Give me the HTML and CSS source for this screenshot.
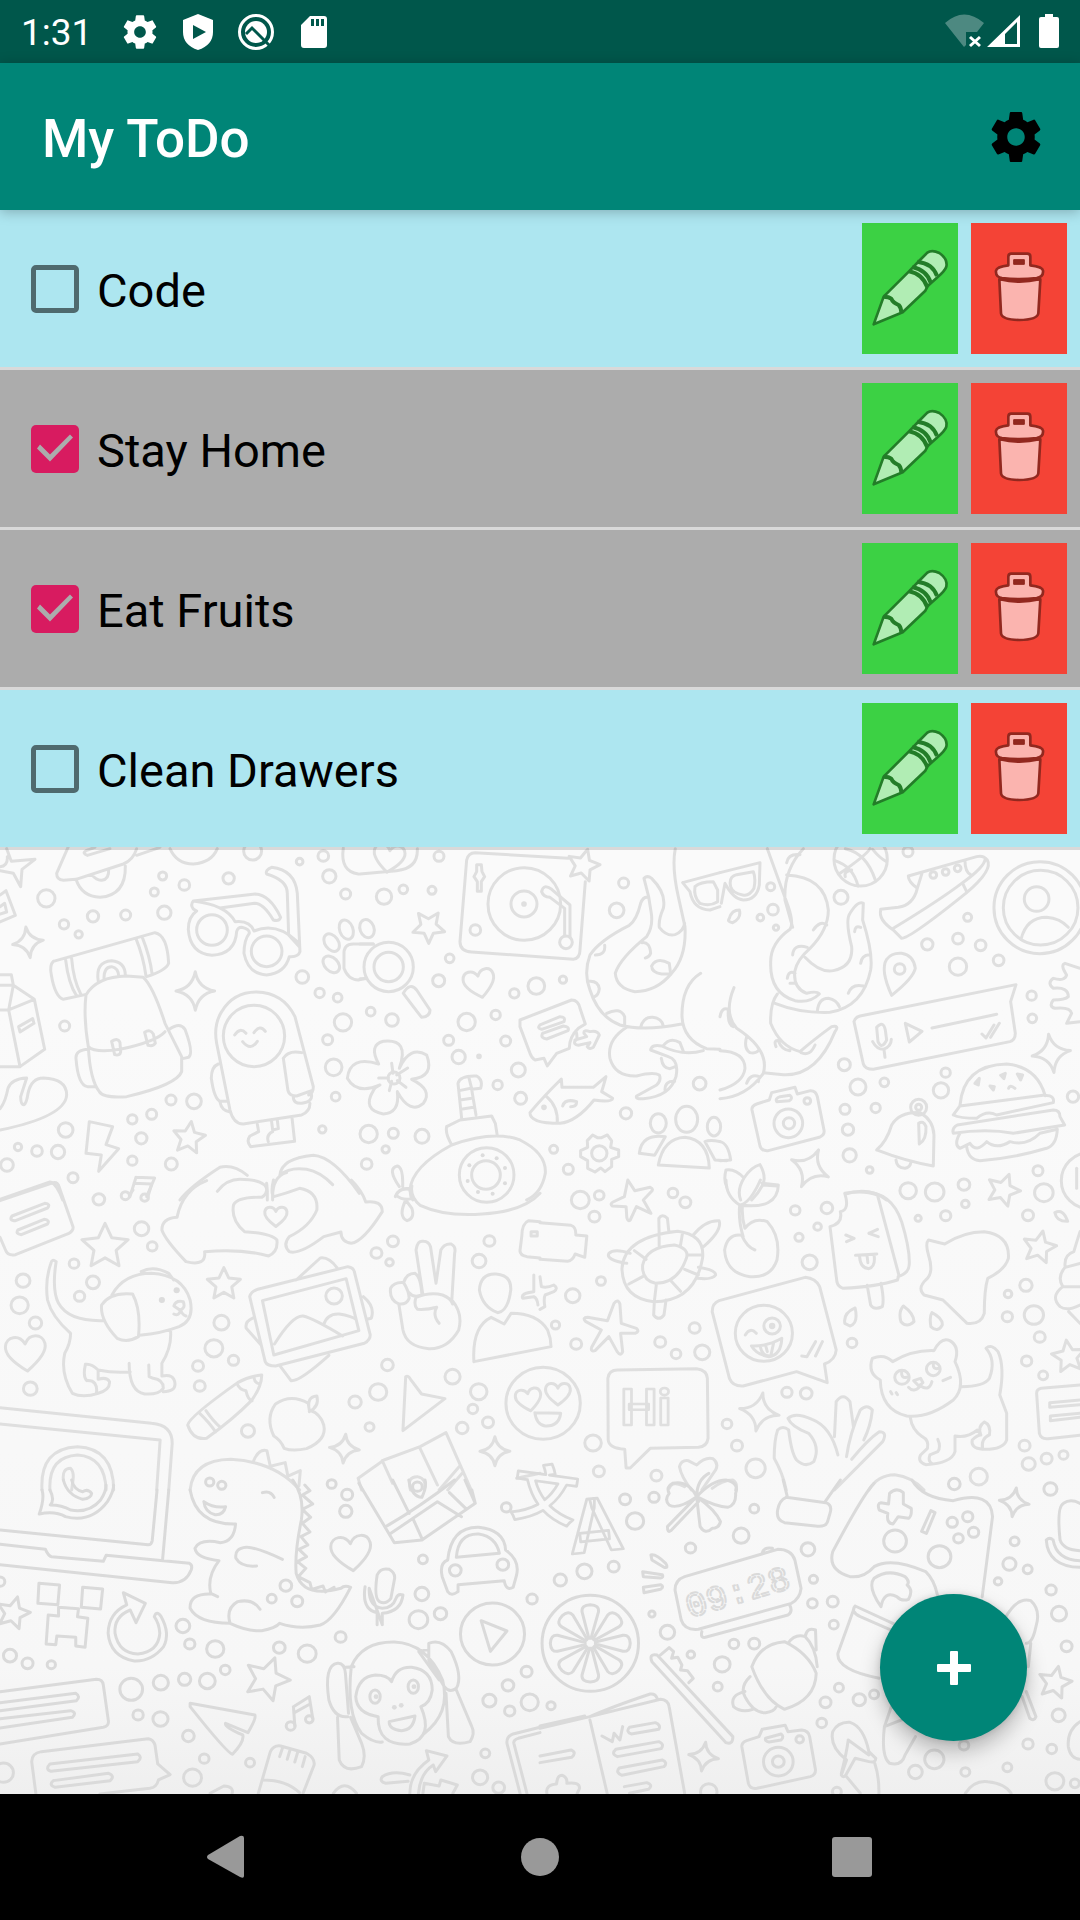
FILE: index.html
```
<!DOCTYPE html>
<html lang="en">
<head>
<meta charset="utf-8">
<meta name="viewport" content="width=device-width, initial-scale=1">
<title>My ToDo</title>
<link rel="stylesheet" href="styles.css">
</head>
<body>
<svg class="defs" width="0" height="0" aria-hidden="true">
  <symbol id="gear" viewBox="0 0 24 24"><path d="M19.43 12.98c.04-.32.07-.64.07-.98s-.03-.66-.07-.98l2.11-1.65c.19-.15.24-.42.12-.64l-2-3.46c-.12-.22-.39-.3-.61-.22l-2.49 1c-.52-.4-1.08-.73-1.69-.98l-.38-2.65C14.46 2.18 14.25 2 14 2h-4c-.25 0-.46.18-.49.42l-.38 2.65c-.61.25-1.17.59-1.69.98l-2.49-1c-.23-.09-.49 0-.61.22l-2 3.46c-.13.22-.07.49.12.64l2.11 1.65c-.04.32-.07.65-.07.98s.03.66.07.98l-2.11 1.65c-.19.15-.24.42-.12.64l2 3.46c.12.22.39.3.61.22l2.49-1c.52.4 1.08.73 1.69.98l.38 2.65c.03.24.24.42.49.42h4c.25 0 .46-.18.49-.42l.38-2.65c.61-.25 1.17-.59 1.69-.98l2.49 1c.23.09.49 0 .61-.22l2-3.46c.12-.22.07-.49-.12-.64l-2.11-1.65zM12 15.5c-1.93 0-3.5-1.57-3.5-3.5s1.57-3.5 3.5-3.5 3.5 1.57 3.5 3.5-1.57 3.5-3.5 3.5z"/></symbol>
  <symbol id="pencil" viewBox="66 69 288 393">
    <path d="M101 373L131 290L207 214L240 180L262 158Q276 148 298 159Q324 177 319 200Q316 212 290 234L264 257L256 272L188 337Z"/>
    <path class="thick" d="M131 290Q147 290 154 296Q158 308 176 315Q183 322 184 337M207 214Q248 222 262 262M217 201Q260 210 272 248M232 185Q278 190 291 228"/>
  </symbol>
  <symbol id="trash" viewBox="393 69 288 393">
    <path d="M478 238L483 340Q486 359 538 360Q592 359 595 340L601 238Z"/>
    <path class="thick" d="M480 236Q538 250 598 236"/>
    <path d="M505 196V170Q505 161 514 161H562Q571 161 571 170V196Q608 200 609 212Q611 231 590 234Q538 240 486 234Q466 231 468 212Q470 200 505 196Z"/>
    <path class="slot" d="M521 179H553V193H521Z"/>
  </symbol>
</svg>

<header class="status">
  <time class="clock">1:31</time>
  <div class="notices">
    <svg class="notice" aria-hidden="true"><use href="#gear"/></svg>
    <svg class="notice" viewBox="0 0 40 40" aria-hidden="true"><path fill-rule="evenodd" d="M20 2L35 8V20Q35 33 20 38Q5 33 5 20V8ZM15 13V27L28 20Z"/></svg>
    <svg class="notice" viewBox="0 0 40 40" aria-hidden="true"><circle cx="20" cy="20" r="16.500" fill="none" stroke="#fff" stroke-width="3"/><circle cx="20" cy="20" r="11"/><path d="M10 22L16 16L34 34" fill="none" stroke="#00574b" stroke-width="3"/></svg>
    <svg class="notice" viewBox="0 0 40 40" aria-hidden="true"><path fill-rule="evenodd" d="M16 4H30Q33 4 33 7V33Q33 36 30 36H10Q7 36 7 33V13ZM17 7V14H20V7ZM22 7V14H25V7ZM27 7V14H30V7Z"/></svg>
  </div>
  <div class="signals">
    <svg width="39" height="36" viewBox="0 0 39 36" aria-hidden="true"><path opacity=".3" d="M0 9Q19-8 39 9L32 18H21V31L19 33Z"/><path d="M25 23L35 32M35 23L25 32" stroke="#fff" stroke-width="3"/></svg>
    <svg width="33" height="36" viewBox="0 0 33 36" aria-hidden="true"><path fill-rule="evenodd" d="M33 1V33H0ZM30 8L18 20V30H30Z"/></svg>
    <svg class="battery" width="20" height="36" viewBox="0 0 20 36" aria-hidden="true"><path d="M6 0H14V3H18Q20 3 20 5V32Q20 34 18 34H2Q0 34 0 32V5Q0 3 2 3H6Z"/></svg>
  </div>
</header>

<div class="appbar">
  <h1>My ToDo</h1>
  <button class="settings" type="button" aria-label="Settings"><svg aria-hidden="true"><use href="#gear"/></svg></button>
</div>

<main>
  <svg class="wallpaper" viewBox="0 210 1080 1584" preserveAspectRatio="xMidYMax slice" aria-hidden="true">
    <defs>
      <path id="spark" d="M0-58Q8-10 58 0Q10 8 0 58Q-8 10-58 0Q-10-8 0-58Z"/>
      <path id="st" d="M0-50L14-19L48-15L23 8L29 41L0 24L-29 41L-23 8L-48-15L-14-19Z"/>
      <path id="heart" d="M0 45C-20 30-50 5-46-18C-42-42-12-45 0-20C12-45 42-42 46-18C50 5 20 30 0 45Z"/>
    </defs>

    <!-- upper left: skateboard, glasses, backpack, astronaut -->
    <g transform="translate(0 840) scale(.3333)">
      <path d="M205 20L170 100Q170 120 190 121L228 118L370 72Q400 60 410 26M410 46L480 22M228 118Q245 170 300 172Q378 166 376 78M275 104Q290 122 305 121Q328 118 326 88M262 46Q245 40 258 32L285 22M262 46L330 26M510 26Q530 72 580 72Q635 68 652 26"/>
      <path d="M20 26L34 64L105 58L66 88L62 140L40 100L0 92M0 165L18 152L46 226L0 246M0 200L14 190L20 216L0 222M0 80Q24 78 22 50"/>
      <path d="M0 404H34L40 436L103 478L134 628L60 680L26 510L40 436H0M26 510L103 478M0 510H26M0 680H60M56 560L98 536L102 550L60 576Z"/>
      <path d="M0 806Q15 790 24 745Q34 716 80 714L62 770Q62 794 72 794Q80 790 84 760Q94 714 130 714Q200 716 200 765Q196 830 0 870"/>
      <path d="M580 183L766 162Q810 164 842 232Q838 245 820 240Q790 190 764 190L660 204M580 183Q570 195 580 207L590 213Q565 230 565 268Q570 340 636 346Q706 342 710 275Q714 262 725 262Q750 268 748 280Q732 300 732 340Q744 402 800 405Q855 400 868 350Q895 352 900 335L892 160Q885 90 815 82Q795 90 800 102Q862 120 862 160L866 285L898 320M580 183Q680 195 705 245Q750 240 762 273Q830 245 892 305"/>
      <circle cx="636" cy="270" r="46"/><circle cx="800" cy="334" r="46"/>
      <path d="M160 364L465 278Q502 285 506 370Q498 392 440 410M160 364Q148 375 154 405Q165 470 190 478L255 464M197 360Q205 430 230 468M215 356Q220 420 243 464M408 296Q430 350 438 408M427 292Q450 350 456 400M295 425Q285 365 335 362Q375 365 376 405M312 415Q312 380 335 380Q355 384 356 408"/>
      <path d="M265 620Q250 530 258 465Q290 410 380 408L430 412Q460 440 495 550L545 650V695Q530 735 380 770Q310 775 298 755Q270 720 265 620ZM265 620Q285 640 360 628Q470 604 495 575M265 628Q226 630 228 655Q234 735 262 740H285M508 568Q540 545 555 568Q582 640 566 652L548 656M335 604Q355 592 360 608L362 636Q360 648 344 644ZM434 577Q450 566 460 582L466 610Q460 620 444 616Z"/>
      <path d="M650 610Q640 555 665 515Q700 456 770 456Q850 458 885 530L940 740Q940 760 926 765M650 610L690 810Q700 852 730 852L905 825Q930 815 930 790M850 655Q865 630 905 638M850 655L864 752Q868 768 890 768L935 752M880 770Q880 792 905 790Q940 785 934 762M655 672Q634 680 634 715Q642 775 660 784H680M660 786Q665 812 688 815M772 852L776 875L750 888Q738 905 752 920L884 904L876 832M815 845L818 870L835 866L832 840M818 875Q798 885 805 905"/>
      <circle cx="762" cy="588" r="92"/><path d="M704 585Q720 560 738 580M762 578Q780 552 796 574M728 605Q752 635 772 604"/>
      <path d="M268 845L338 860L318 914L356 926L296 994L304 945L258 940ZM408 1012L464 1014L440 1070M408 1012L390 1070M402 1030L455 1032"/>
      <path d="M540 1080Q570 1040 660 982Q700 972 742 1006M652 1054Q680 1018 720 1018Q800 1018 802 1054V1080M840 1005Q845 955 940 946Q1000 950 1078 1060M840 1005Q870 980 920 988Q960 995 998 1034M818 1080Q815 1010 860 998M0 1078L150 1026Q170 1030 188 1080"/>
      <use href="#spark" transform="translate(586 453)"/><use href="#spark" transform="translate(84 307) rotate(-8) scale(.8)"/><use href="#st" transform="translate(567 894) rotate(8)"/>
      <circle cx="139" cy="175" r="26"/><circle cx="758" cy="33" r="27"/><circle cx="488" cy="108" r="12"/><circle cx="463" cy="156" r="12"/><circle cx="553" cy="135" r="16"/><circle cx="686" cy="115" r="17"/><circle cx="493" cy="218" r="20"/><circle cx="377" cy="225" r="15"/><circle cx="279" cy="229" r="17"/><circle cx="192" cy="253" r="14"/><circle cx="236" cy="283" r="11"/><circle cx="194" cy="558" r="15"/><circle cx="899" cy="65" r="10"/><circle cx="970" cy="48" r="16"/><circle cx="988" cy="109" r="20"/><circle cx="1037" cy="162" r="15"/><circle cx="907" cy="411" r="19"/><circle cx="959" cy="459" r="14"/><circle cx="1013" cy="473" r="13"/><circle cx="1029" cy="547" r="26"/><circle cx="983" cy="599" r="15"/><circle cx="1001" cy="682" r="25"/><circle cx="1007" cy="770" r="13"/><circle cx="967" cy="868" r="11"/><circle cx="513" cy="780" r="15"/><circle cx="582" cy="784" r="22"/><circle cx="455" cy="823" r="15"/><circle cx="397" cy="838" r="14"/><circle cx="424" cy="895" r="17"/><circle cx="397" cy="962" r="14"/><circle cx="514" cy="972" r="18"/><circle cx="197" cy="870" r="22"/><circle cx="174" cy="936" r="20"/><circle cx="111" cy="933" r="16"/><circle cx="54" cy="921" r="11"/><circle cx="21" cy="975" r="19"/><circle cx="219" cy="1013" r="15"/>
      <ellipse cx="1039" cy="269" rx="20" ry="30" transform="rotate(-20 1039 269)"/><ellipse cx="995" cy="308" rx="20" ry="29" transform="rotate(-35 995 308)"/><ellipse cx="994" cy="373" rx="20" ry="29" transform="rotate(-45 994 373)"/><path d="M1120 312H1060Q1030 312 1032 345V385Q1045 420 1075 420L1100 414M1030 24Q1020 95 1075 102"/>
    </g>

    <!-- upper middle: turntable, octopus, fish, submarine -->
    <g transform="translate(360 840) scale(.3333)">
      <path d="M0 102L110 92Q175 85 172 26M625 55L345 38Q325 38 320 60L300 305Q300 334 335 336L640 358Q660 355 660 330L676 125"/>
      <use href="#heart" transform="translate(87 52) rotate(8)"/><use href="#st" transform="translate(670 76) rotate(15)"/><use href="#st" transform="translate(206 260) rotate(35)"/><use href="#heart" transform="translate(358 428) rotate(-12)"/>
      <circle cx="493" cy="192" r="109"/><circle cx="492" cy="192" r="39"/><circle cx="492" cy="192" r="4"/><circle cx="346" cy="270" r="16"/><circle cx="618" cy="307" r="19"/><path d="M350 74H364L366 95L374 110L364 125V154H352V125L342 110L350 95ZM630 290V195L575 148Q550 130 545 155Q550 170 570 172L614 205V288"/>
      <circle cx="86" cy="381" r="74"/><circle cx="86" cy="381" r="44"/><path d="M130 460Q150 425 170 450L210 510Q210 530 185 532Q175 520 130 460M0 312H40M0 416H16"/><ellipse cx="21" cy="266" rx="21" ry="28" transform="rotate(-20 21 266)"/>
      <path d="M946 26Q935 80 955 170L975 260Q980 350 935 400Q890 455 825 455Q770 445 766 400Q780 355 860 290Q880 260 874 220L866 170L852 115Q862 105 875 115Q920 160 910 205Q895 240 898 262Q920 290 945 284Q970 275 974 250M866 172Q850 168 842 190Q830 240 808 256Q720 300 690 345Q670 400 690 450Q715 530 780 555Q850 575 965 552M1022 400Q965 435 966 530Q970 600 1040 626L1080 628M800 562Q740 600 750 655Q765 710 830 708Q880 695 898 705Q905 720 890 735L830 768Q825 778 850 776Q930 770 948 710Q958 660 925 650L872 630Q875 612 905 618Q970 650 1030 632"/>
      <path d="M706 345Q738 345 734 316M846 308Q870 305 872 340Q868 352 856 354M875 378Q890 350 928 370L932 402H905Q875 398 875 378M684 424Q714 420 718 446Q716 465 704 470M740 520Q780 500 794 530V552M842 562Q850 530 878 532Q906 535 910 558M910 617Q930 590 960 608L970 634M904 655Q908 686 930 686L946 680M915 750Q915 722 944 724"/>
      <path d="M968 128L1080 98M968 128L990 155Q1000 208 1050 210L1080 200M1005 140Q1020 125 1060 125L1073 150V185Q1050 200 1020 190Q1000 170 1005 140Z"/>
      <path d="M480 540L635 480Q655 480 660 505L676 552L655 565Q628 590 628 625L590 640L562 678L552 655L525 660Q515 655 510 640L480 560ZM540 555L600 530Q618 530 612 545L545 568Q530 565 540 555M548 580L610 558Q630 560 624 572L560 597Q540 595 548 580M648 572Q655 600 645 602Q640 615 655 616L690 608L682 620Q688 630 700 622L718 585Q712 570 690 575Q670 568 672 580L680 590L645 600"/>
      <path d="M56 672Q25 615 70 604Q150 595 118 685Q150 615 200 645Q225 710 155 718Q220 750 190 790Q150 825 112 755Q120 820 70 822Q5 810 40 752Q45 742 60 735Q-10 765-38 715Q-30 645 56 672M56 714H85M95 670L99 700M143 684L110 705M138 742L112 722M88 752L95 724"/><circle cx="102" cy="714" r="18"/>
      <path d="M510 818Q550 770 604 717L606 742L700 742L738 710Q730 740 725 755L758 775Q755 788 702 780Q650 845 600 850Q510 850 510 818ZM560 770Q595 800 592 850M608 798Q615 775 650 785Q650 800 632 800"/><circle cx="552" cy="802" r="4"/>
      <path d="M305 835L294 730Q300 706 350 708Q370 720 362 745L335 748L348 825M326 710L336 750M298 752L332 745M300 780L335 775M303 808L340 802M260 860L300 840L395 828L406 850L412 888M260 860Q255 880 275 914M150 1050Q155 980 275 915Q400 870 480 900Q560 940 556 1000Q545 1060 500 1080M150 1050L158 1080M118 1040Q80 985 112 978Q130 982 128 1040M106 1070Q115 1045 150 1045"/>
      <circle cx="380" cy="1005" r="82"/><circle cx="378" cy="1005" r="43"/><g class="dots"><circle cx="368" cy="946" r="6"/><circle cx="410" cy="955" r="6"/><circle cx="328" cy="976" r="6"/><circle cx="435" cy="984" r="6"/><circle cx="323" cy="1023" r="6"/><circle cx="435" cy="1030" r="6"/><circle cx="354" cy="1056" r="6"/><circle cx="398" cy="1061" r="6"/></g>
      <path d="M698 885L712 893H725L742 885L755 903L752 922L776 930V950L755 958V980L735 995L722 984L705 996L683 985V962L662 950V932L683 922L682 902Z"/><circle cx="718" cy="940" r="23"/>
      <ellipse cx="895" cy="850" rx="24" ry="29"/><ellipse cx="980" cy="838" rx="33" ry="39"/><ellipse cx="1062" cy="860" rx="20" ry="28"/><path d="M895 975Q910 895 975 892Q1045 900 1048 984ZM838 940Q845 880 916 890L884 946ZM1080 905Q1050 898 1035 905L1065 960L1100 962"/>
      <circle cx="237" cy="49" r="15"/><circle cx="72" cy="170" r="23"/><circle cx="130" cy="148" r="13"/><circle cx="216" cy="151" r="12"/><circle cx="269" cy="355" r="13"/><circle cx="236" cy="422" r="18"/><circle cx="529" cy="438" r="25"/><circle cx="463" cy="460" r="14"/><circle cx="609" cy="419" r="11"/><circle cx="320" cy="546" r="26"/><circle cx="407" cy="525" r="14"/><circle cx="266" cy="601" r="15"/><circle cx="437" cy="603" r="15"/><circle cx="296" cy="651" r="20"/><circle cx="32" cy="515" r="13"/><circle cx="96" cy="540" r="19"/><circle cx="357" cy="649" r="4"/><circle cx="475" cy="690" r="21"/><circle cx="413" cy="735" r="14"/><circle cx="482" cy="775" r="18"/><circle cx="791" cy="129" r="15"/><circle cx="770" cy="211" r="22"/><circle cx="798" cy="820" r="17"/><circle cx="1019" cy="731" r="19"/><circle cx="26" cy="882" r="26"/><circle cx="100" cy="880" r="15"/><circle cx="186" cy="889" r="21"/><circle cx="77" cy="928" r="11"/><circle cx="20" cy="972" r="16"/><circle cx="581" cy="928" r="12"/><circle cx="625" cy="988" r="15"/>
    </g>

    <!-- upper right: tentacles, sneaker, voice note, burger -->
    <g transform="translate(720 840) scale(.3333)">
      <path d="M0 98L120 68L118 135Q110 180 70 180Q40 178 15 130L4 190M32 140Q25 110 50 104L100 95Q108 115 102 145Q88 170 68 165Q38 160 32 140ZM28 235Q35 210 58 210Q65 235 38 248Q20 245 28 235M142 26L205 200Q222 250 210 268Q150 310 152 370Q150 460 225 482Q270 490 298 462Q290 452 260 460Q220 445 224 395Q230 360 270 325Q325 270 325 210Q315 110 200 105M250 26Q190 90 195 180L218 262M255 352Q300 400 340 392Q400 380 395 320Q375 240 390 220Q415 180 430 190L428 240Q460 340 452 390Q430 500 330 517Q240 520 165 490M172 462Q150 490 152 550Q180 620 240 635Q280 600 335 560Q360 555 345 575Q290 710 190 704L130 698M42 443Q10 520 50 565Q150 630 130 700Q80 770 0 776M0 632Q75 635 75 685Q70 730 0 750M200 68Q205 40 240 44M280 270Q300 240 320 255M218 345Q220 310 262 322M202 415Q205 390 225 400M210 430H225M404 275Q405 255 422 262M422 370Q425 345 448 344M385 460Q395 430 430 438M292 515Q295 475 325 475Q350 480 358 500M168 620Q160 600 175 602Q185 630 210 632M243 638Q270 650 285 615M0 530Q5 500 25 508Q22 555 40 560M80 590Q70 625 90 638Q110 642 118 628M80 730Q90 700 118 710L115 725"/>
      <circle cx="422" cy="58" r="80"/><path d="M345 62Q400 80 414 138M360 100Q440 45 450 26M376 26Q440 40 466 120M458 28Q480 55 500 65M376 110Q370 95 395 90"/>
      <path d="M482 210Q475 240 520 270L545 295Q570 295 740 158Q820 90 802 60Q790 45 770 50L565 108Q565 125 592 145L606 100M592 145Q580 195 535 202L482 208M520 265Q660 180 728 128Q795 80 796 55M735 62Q735 95 752 104M728 130L740 155"/><circle cx="640" cy="105" r="10"/><circle cx="677" cy="96" r="10"/><circle cx="713" cy="85" r="10"/>
      <circle cx="960" cy="203" r="138"/><circle cx="962" cy="203" r="112"/><circle cx="950" cy="177" r="37"/><path d="M903 298Q920 232 980 232Q1020 235 1045 262"/>
      <path d="M515 466Q480 390 500 358Q515 338 545 340Q580 345 586 385Q580 415 515 466Z"/><circle cx="539" cy="387" r="16"/>
      <path d="M402 545Q405 532 420 528L888 434L872 485L886 580Q886 600 870 605L460 688Q435 688 430 672ZM636 564L830 523M556 550L606 574L568 606ZM470 562Q490 540 496 570L500 600Q485 630 474 605ZM458 605Q470 628 490 628Q514 620 514 598M492 628L495 652M786 582L798 594L822 555M812 592L838 550"/>
      <path d="M1080 385L1035 370Q1020 375 1040 405Q1035 425 1000 415Q980 430 1000 445Q1045 440 1045 470Q1035 480 1000 480Q985 500 1005 505Q1050 500 1055 520L1040 550L1080 545"/>
      <path d="M720 796Q730 675 860 672Q950 680 975 765L720 798L700 825Q720 835 770 835Q800 810 830 825L1000 788Q1005 765 975 767M712 855L1000 810Q1020 810 1020 830L1034 855L880 880Q800 865 700 880Q695 865 712 855ZM720 880Q700 915 720 925L750 910Q770 940 800 905Q830 930 870 905Q920 920 960 880L1012 868Q1010 915 980 925Q880 955 780 962Q745 960 740 920M765 730L778 715L775 735ZM810 738L820 750L823 740ZM842 706L856 700L852 716ZM866 745Q870 732 885 745M892 702L908 705L902 720Z"/>
      <path d="M470 930Q500 905 515 855Q540 815 600 818Q640 840 642 885L640 978Q560 965 470 930M528 960Q530 985 555 985Q570 982 572 970M596 850Q610 840 618 860Q620 900 598 912Z"/><circle cx="596" cy="802" r="24"/><circle cx="596" cy="802" r="9"/>
      <path d="M96 810Q94 798 110 792L148 780L155 758L225 742L232 762L272 752Q288 752 292 770L312 870Q315 885 298 892L145 932Q125 934 120 918ZM170 785Q165 775 180 770L210 766Q220 775 208 782Z"/><circle cx="205" cy="850" r="43"/><circle cx="207" cy="850" r="17"/><circle cx="262" cy="783" r="10"/>
      <path d="M18 990Q45 985 72 1014Q95 980 120 974Q140 1010 128 1035L172 1038M18 990Q10 1020 20 1040M72 1014Q50 1050 62 1080M128 1035Q115 1060 95 1080M0 905Q25 910 32 960L0 962M376 1062Q450 1040 500 1080"/>
      <use href="#spark" transform="translate(994 640) rotate(-8)"/><use href="#spark" transform="translate(270 985) rotate(25) scale(1.050)"/>
      <circle cx="564" cy="35" r="15"/><circle cx="363" cy="172" r="21"/><circle cx="152" cy="140" r="12"/><circle cx="159" cy="209" r="16"/><circle cx="121" cy="233" r="10"/><circle cx="168" cy="263" r="8"/><circle cx="743" cy="232" r="12"/><circle cx="622" cy="313" r="17"/><circle cx="714" cy="296" r="16"/><circle cx="782" cy="316" r="16"/><circle cx="836" cy="361" r="16"/><circle cx="714" cy="380" r="26"/><circle cx="935" cy="467" r="14"/><circle cx="937" cy="535" r="13"/><circle cx="677" cy="698" r="14"/><circle cx="663" cy="751" r="23"/><circle cx="373" cy="674" r="18"/><circle cx="414" cy="741" r="24"/><circle cx="493" cy="727" r="13"/><circle cx="375" cy="808" r="15"/><circle cx="467" cy="804" r="14"/><circle cx="384" cy="869" r="17"/><circle cx="389" cy="946" r="20"/><circle cx="449" cy="990" r="10"/><circle cx="954" cy="992" r="15"/><circle cx="1059" cy="770" r="17"/><circle cx="1108" cy="1022" r="84"/><path d="M1070 985V1045"/>
    </g>

    <!-- middle left: hands, puppy, photo, peace sign -->
    <g transform="translate(0 1180) scale(.3444 .3333)">
      <path d="M0 62L155 8Q168 6 172 22L212 140Q214 152 200 160L45 224Q22 228 16 210L0 172M35 108L130 70Q148 72 138 84L45 122Q25 122 35 108M52 150L128 118Q146 120 138 132L62 164Q44 162 52 150M386 30L376 44M440 14L430 48"/><circle cx="364" cy="47" r="12"/><circle cx="420" cy="53" r="11"/>
      <path d="M600 2Q530 30 514 112Q470 115 470 150Q480 180 540 245Q600 260 594 215Q700 205 780 228Q808 215 804 180Q790 160 710 155Q670 120 678 75Q690 50 760 52Q780 40 774 10M794 0Q785 40 795 50Q830 40 870 25Q925 35 920 90Q900 140 840 170Q820 195 840 215Q870 225 940 170L990 156Q990 185 1020 190Q1055 185 1110 95Q1110 60 1062 66Q1050 30 1020 0"/><use href="#heart" transform="translate(801 108) scale(.7)"/>
      <path d="M1196 18Q1190 50 1220 76Q1290 110 1400 102Q1520 95 1568 40M1150 46Q1160 22 1190 28L1194 56Q1170 62 1150 46M1178 60Q1155 110 1182 122Q1205 115 1196 85Z"/>
      <path d="M163 245Q150 235 148 250Q130 300 138 360Q150 410 205 460Q205 490 188 520Q175 580 210 640Q240 655 285 640Q320 630 318 605Q310 590 285 598L285 570Q265 550 248 553Q240 590 252 602Q285 600 280 640M163 245Q150 330 170 370Q200 425 300 422M285 570Q330 580 378 576M375 550Q375 635 420 642Q460 645 474 625Q475 600 445 595L433 590L432 555M474 635Q510 635 508 610Q505 580 470 588L470 550Q500 500 495 450M325 345Q360 280 440 280Q530 285 552 360Q565 420 520 440Q470 460 405 466M410 275Q445 255 490 280L504 300M385 342Q410 390 402 470Q370 490 340 475Q290 420 295 375Q320 335 385 342ZM505 378Q510 360 532 365Q540 385 522 390ZM505 402Q520 410 524 390Q530 405 540 408"/><g class="dots"><circle cx="470" cy="360" r="9"/><circle cx="513" cy="331" r="9"/></g>
      <use href="#st" transform="translate(305 200) scale(1.400)"/><use href="#st" transform="translate(650 313)"/><use href="#heart" transform="translate(75 517) rotate(-5) scale(1.250)"/>
      <path d="M725 350Q730 330 760 325L1010 260Q1028 262 1030 280L1075 465Q1075 480 1058 490L800 558Q775 558 770 545ZM762 362L1005 296L1042 452L795 525ZM797 492Q850 405 880 408Q910 415 995 468M940 434Q950 400 985 402Q1020 408 1034 418M860 300L930 234Q955 230 980 265M735 414Q710 425 715 445L758 495M1055 350Q1090 380 1078 415L1066 418M812 556L845 602Q870 605 955 526"/><circle cx="970" cy="348" r="24"/>
      <path d="M1228 345L1208 210Q1212 180 1230 184Q1245 185 1250 200L1266 310L1280 210Q1290 190 1310 192Q1325 200 1320 220L1312 360Q1345 400 1332 450Q1300 508 1245 506Q1180 500 1170 450L1158 372Q1130 360 1134 325Q1145 305 1172 308Q1188 335 1188 355Q1180 375 1158 372M1172 308Q1180 280 1205 280Q1222 290 1225 345Q1200 355 1188 338M1208 352Q1250 335 1285 345Q1310 355 1314 372M1208 352Q1200 375 1212 388Q1240 390 1268 382Q1255 405 1275 430"/>
      <path d="M1392 330Q1395 280 1440 282Q1485 285 1483 330Q1475 395 1445 398Q1400 380 1392 330ZM1376 545Q1370 440 1426 412L1464 432L1484 400Q1560 400 1590 450Q1600 475 1600 500L1376 545M1568 125L1535 122Q1515 130 1515 170L1510 210Q1508 225 1530 230L1568 234M1542 155H1560V168H1542ZM1550 285V335Q1510 340 1518 355L1550 350Q1560 355 1562 375"/>
      <path d="M545 735Q550 710 690 608Q720 590 760 585Q760 620 730 662Q680 715 600 775Q560 782 545 735ZM580 700Q610 730 626 756M598 692Q620 725 640 742M688 610Q695 630 714 632Q720 660 732 662M738 595Q740 610 754 612"/>
      <path d="M895 670Q845 640 800 672Q770 715 795 768Q815 780 825 805Q850 815 890 806Q950 780 940 735Q930 700 898 690ZM898 690Q890 650 920 648Q928 680 898 695M1178 590Q1185 585 1192 598L1224 642L1292 656L1170 752Z"/>
      <circle cx="1577" cy="670" r="108"/><use href="#heart" transform="translate(1535 657) rotate(-10) scale(.8)"/>
      <use href="#spark" transform="translate(1000 806) rotate(5) scale(.75)"/><use href="#spark" transform="translate(1437 814) scale(.75)"/>
      <path d="M0 683L440 730Q500 735 500 790L490 930M0 732L465 780L455 930M122 930Q115 805 225 800Q330 805 330 930M145 930Q140 830 225 825Q305 830 308 930M184 900Q180 865 205 865Q215 875 212 900L208 930"/>
      <path d="M552 930Q560 840 670 838Q800 845 870 930M735 846Q750 805 775 812L785 860M788 858L828 848L835 884M838 888L872 872L868 918M1040 895L1115 840L1220 800L1295 758L1368 930M1040 895L1050 930M1110 842L1140 910M1220 806L1270 915M1335 858L1275 930M1342 880L1300 930M1192 930Q1180 890 1212 890Q1240 895 1232 930M1500 895L1568 880"/>
      <circle cx="287" cy="58" r="17"/><circle cx="411" cy="146" r="21"/><circle cx="442" cy="199" r="14"/><circle cx="67" cy="302" r="20"/><circle cx="57" cy="376" r="25"/><circle cx="103" cy="429" r="18"/><circle cx="215" cy="251" r="14"/><circle cx="270" cy="307" r="19"/><circle cx="231" cy="349" r="15"/><circle cx="88" cy="626" r="20"/><circle cx="643" cy="428" r="22"/><circle cx="621" cy="505" r="26"/><circle cx="678" cy="541" r="15"/><circle cx="575" cy="558" r="16"/><circle cx="580" cy="618" r="16"/><circle cx="720" cy="753" r="19"/><circle cx="1141" cy="184" r="16"/><circle cx="1093" cy="219" r="16"/><circle cx="1131" cy="247" r="11"/><circle cx="1421" cy="183" r="16"/><circle cx="1391" cy="243" r="20"/><circle cx="1125" cy="555" r="17"/><circle cx="1098" cy="636" r="25"/><circle cx="1031" cy="666" r="18"/><circle cx="1073" cy="741" r="13"/><circle cx="1314" cy="590" r="22"/><circle cx="1390" cy="635" r="24"/><circle cx="1373" cy="687" r="14"/><circle cx="1417" cy="727" r="16"/><circle cx="1342" cy="744" r="17"/>
    </g>

    <!-- middle right: turtle, ice cream, chat bubbles, cat -->
    <g transform="translate(540 1180) scale(.3444 .3333)">
      <path d="M0 128L90 136Q105 140 104 165L136 168L130 232L102 222Q95 242 80 244L0 238M0 290L4 320Q20 325 40 315Q55 325 40 335L15 345Q10 355 14 380L0 388"/>
      <path d="M238 265Q245 170 400 154Q480 165 472 235Q450 365 330 365Q240 355 238 265ZM298 255Q310 200 390 195Q435 205 425 235Q400 310 335 310Q295 300 298 255M346 170V198M414 158L408 196M470 225H428M460 285L420 268M408 334L380 302M332 364L338 312M258 312L298 290M274 212L308 238M346 165L345 115Q355 100 370 115L374 154M445 165Q480 120 520 122Q530 150 475 200M460 262Q510 270 510 285Q500 300 458 295M252 250Q190 240 200 220Q215 205 262 220M332 365L330 405Q345 425 360 405L366 360"/>
      <path d="M580 75Q540 50 540 0M580 75Q575 120 590 170M640 0Q610 70 580 75Q690 90 692 15L645 10M588 75Q585 110 595 145Q620 110 660 125Q700 170 688 240Q670 295 610 290Q540 280 536 210Q545 160 586 166Q600 200 624 210"/>
      <path d="M885 40Q940 30 980 45L1042 285L1038 300Q980 320 880 325Q865 320 862 305L842 140Q880 130 872 95Q900 90 885 40M940 36Q1020 35 1050 125Q1075 210 1072 255Q1070 280 1040 290M950 316L960 375Q970 392 994 380Q1000 360 990 310M888 165L912 175L890 185M955 160L980 148M955 160L982 170M916 226L978 222M928 230Q930 265 955 266Q975 260 970 225M950 230L952 248"/>
      <path d="M1128 180L1175 192Q1230 155 1290 155Q1365 165 1360 235Q1350 270 1300 295Q1290 330 1290 400Q1280 435 1240 430Q1190 380 1170 360L1115 345Q1095 325 1120 300Q1145 280 1128 225Q1118 190 1128 180Z"/>
      <path d="M500 395Q500 370 520 362L770 292Q800 295 812 320L860 510Q858 540 826 552L834 608L745 575L590 618Q560 620 550 595ZM760 528L775 530L800 485M800 528L820 485"/><ellipse cx="650" cy="460" rx="83" ry="84"/><circle cx="674" cy="438" r="24"/><circle cx="674" cy="438" r="5"/><path d="M596 465Q610 440 628 460M614 498Q660 500 702 475Q700 525 665 530Q630 525 614 498M640 500Q645 530 670 528L678 490M655 496L660 515"/>
      <path d="M197 595Q200 570 225 570L455 566Q485 570 486 595L488 775Q485 800 460 802L320 805L262 864H250L246 808Q200 805 198 780Z"/><text class="word" x="234" y="736" font-size="152">Hi</text>
      <use href="#heart" transform="translate(52 640) scale(.78)"/><path d="M-15 698L60 700Q55 740 15 738Q-10 735-15 698"/>
      <path d="M988 600Q950 580 965 535Q1000 520 1024 545Q1080 510 1144 512Q1165 470 1190 482Q1220 500 1205 545Q1240 620 1200 660Q1130 715 1065 708Q990 690 988 600ZM1224 620Q1290 620 1305 595Q1325 540 1295 505Q1310 490 1330 515Q1350 560 1335 645L1355 700V780Q1345 810 1285 808Q1250 805 1255 780Q1270 765 1280 765L1270 750Q1240 775 1205 768V815Q1195 850 1120 854Q1095 845 1105 825L1125 805Q1130 780 1110 770Q1080 750 1075 712M1280 765Q1270 740 1290 726Q1310 735 1305 765Q1280 775 1285 808M1155 778Q1165 800 1155 815L1132 825Q1125 845 1140 852M1085 602L1105 595L1112 608L1100 618ZM1070 622Q1085 640 1105 618Q1130 635 1138 605M1170 602L1192 592M1018 635L1022 642M1034 638L1038 644"/><circle cx="1051" cy="592" r="21"/><circle cx="1142" cy="567" r="20"/><path d="M1050 575Q1048 595 1065 592M1142 550Q1140 570 1158 565"/>
      <path d="M715 930Q705 880 680 835Q680 780 690 750Q705 735 722 750Q730 820 745 840Q770 865 795 845Q815 800 780 760Q730 740 720 715Q740 695 790 718Q845 740 865 825M855 770L860 665Q880 635 900 665L910 740M890 830Q900 760 930 690Q950 670 965 690Q960 740 940 780M905 838Q950 780 985 755Q1010 755 995 785L855 930"/>
      <path d="M885 430Q880 400 915 384Q925 430 900 438ZM1048 425Q1040 395 1055 378Q1085 400 1086 425Q1065 445 1048 425ZM1135 440Q1130 410 1138 398Q1170 415 1168 435Q1155 460 1135 440ZM1495 98Q1520 85 1532 124Q1500 125 1495 98M1568 155Q1560 180 1550 215Q1520 225 1525 262Q1500 290 1518 320Q1480 350 1510 380Q1530 395 1568 375M1525 262L1568 250M1518 320H1568M1535 395L1568 430M1442 640Q1442 628 1455 625L1568 615M1442 640L1450 760Q1455 778 1475 776L1568 766M1568 660L1480 668V682L1568 674M1568 700L1482 708V722L1568 712"/>
      <path d="M255 0L275 32L320 22Q332 28 322 36L300 60L322 100L280 80L262 120Q255 126 252 112L250 80L210 78Q202 72 212 66L245 50ZM215 370Q226 355 232 372L236 430L280 445Q290 455 276 460L234 460L240 515Q234 530 224 515L200 470L160 512Q146 516 150 502L178 450L132 424Q122 412 138 412L196 422Z"/>
      <use href="#st" transform="translate(1345 30) rotate(20)"/><use href="#st" transform="translate(1450 202) rotate(12)"/><use href="#st" transform="translate(1535 530) rotate(-8)"/><use href="#spark" transform="translate(637 696) rotate(10)"/>
      <path d="M405 860Q410 840 430 842L455 855Q480 830 502 836Q520 850 510 870L470 930M405 860Q410 890 440 930M375 925Q385 900 420 920M500 925Q530 900 560 900Q575 910 568 930M955 930Q980 885 1030 884Q1080 890 1115 930"/>
      <circle cx="117" cy="60" r="26"/><circle cx="172" cy="46" r="14"/><circle cx="158" cy="110" r="16"/><circle cx="386" cy="39" r="14"/><circle cx="422" cy="67" r="16"/><circle cx="177" cy="303" r="13"/><circle cx="95" cy="347" r="21"/><circle cx="45" cy="435" r="12"/><circle cx="105" cy="492" r="16"/><circle cx="349" cy="486" r="16"/><circle cx="395" cy="522" r="14"/><circle cx="449" cy="444" r="16"/><circle cx="471" cy="517" r="22"/><circle cx="741" cy="91" r="14"/><circle cx="833" cy="84" r="17"/><circle cx="806" cy="140" r="11"/><circle cx="752" cy="172" r="12"/><circle cx="783" cy="247" r="22"/><circle cx="1069" cy="32" r="24"/><circle cx="1146" cy="36" r="27"/><circle cx="1231" cy="14" r="17"/><circle cx="1463" cy="38" r="27"/><circle cx="1098" cy="115" r="9"/><circle cx="1178" cy="107" r="15"/><circle cx="1235" cy="72" r="11"/><circle cx="1417" cy="106" r="16"/><circle cx="1411" cy="316" r="18"/><circle cx="1359" cy="342" r="11"/><circle cx="1357" cy="410" r="15"/><circle cx="1434" cy="405" r="28"/><circle cx="1451" cy="471" r="16"/><circle cx="1413" cy="543" r="15"/><circle cx="1461" cy="586" r="13"/><circle cx="906" cy="489" r="14"/><circle cx="717" cy="637" r="15"/><circle cx="773" cy="640" r="17"/><circle cx="543" cy="732" r="14"/><circle cx="572" cy="797" r="16"/><circle cx="626" cy="865" r="28"/><circle cx="154" cy="789" r="24"/><circle cx="171" cy="874" r="16"/><circle cx="338" cy="887" r="16"/><circle cx="1407" cy="797" r="16"/><circle cx="1419" cy="852" r="19"/><circle cx="1471" cy="836" r="16"/><circle cx="1520" cy="825" r="13"/><circle cx="1274" cy="890" r="25"/>
    </g>

    <!-- lower left: laptop, dinosaur, monkey, car -->
    <g class="low" transform="translate(0 1480) scale(.3444 .3333)">
      <path d="M0 150L430 194Q440 194 442 182L456 30M490 30L472 240M0 193L132 208Q140 228 150 230L300 244L308 226L550 250Q560 255 555 270Q540 310 500 308L0 254M122 30Q130 55 114 102Q160 92 190 110Q265 130 312 65Q330 35 330 15M145 30Q160 60 146 75Q180 75 205 90Q260 100 292 60Q308 35 308 15M184 0Q195 45 240 58Q265 55 266 40Q255 25 240 35Q215 30 208 0"/>
      <path d="M552 30Q570 135 684 132Q680 185 640 188Q580 175 566 205Q570 235 636 242Q600 290 612 340L632 350M612 342Q550 340 552 385Q575 430 668 430Q720 455 760 452Q800 445 812 430Q870 450 930 435Q970 420 1018 322Q1000 315 990 325Q880 355 860 280Q855 220 875 120Q885 50 850 0M820 238Q740 200 715 202Q680 205 685 235Q700 262 745 258M668 430Q655 385 690 365Q735 355 755 388M592 65Q620 85 655 80Q650 105 625 104Q595 98 592 65M762 38Q785 30 796 52M885 15L900 32L878 45L908 72L878 88L902 112L878 130L900 156L874 170L894 195L868 208L890 230L864 245L888 265L866 290L900 308L905 328L938 318L945 336L970 322"/><circle cx="830" cy="317" r="17"/><circle cx="789" cy="356" r="13"/><circle cx="863" cy="364" r="16"/><circle cx="609" cy="6" r="12"/><circle cx="644" cy="16" r="12"/>
      <use href="#heart" transform="translate(1020 216) rotate(-6) scale(1.250)"/>
      <path d="M1042 10L1145 188L1225 180L1380 70L1350 0M1120 140Q1220 80 1320 0M1135 160L1270 65L1340 110M1380 70L1370 30M1200 118L1225 175M1140 0L1188 100M1187 0Q1195 50 1225 52Q1240 20 1234 0M1305 38L1355 88"/><circle cx="1212" cy="20" r="14"/>
      <path d="M1300 240Q1310 140 1390 142Q1465 150 1468 210Q1510 240 1500 285L1490 322Q1470 335 1464 302L1330 314V335Q1310 350 1300 335L1284 290Q1275 250 1300 240ZM1325 232Q1330 160 1390 162Q1440 170 1450 220ZM1095 285Q1105 262 1130 268Q1150 280 1145 300L1135 355Q1120 375 1102 365Q1085 355 1095 285M1060 320Q1050 390 1095 398V434M1110 434V400Q1165 395 1170 345Q1155 340 1150 355Q1140 385 1110 385Q1070 380 1072 325Z"/><circle cx="1322" cy="271" r="17"/><circle cx="1460" cy="254" r="17"/>
      <use href="#st" transform="translate(38 399) rotate(15)"/><path d="M113 310L173 315L168 374L110 370ZM240 322L298 327L292 387L236 382ZM170 382L228 386L225 410L255 415L247 502L220 498V472L165 468L162 494L134 492L140 405L170 408Z"/>
      <path d="M358 338L422 370L395 428L378 390Q330 410 334 460Q345 520 400 522Q460 515 464 460Q462 430 448 410Q455 390 468 410Q495 460 475 500Q440 545 390 543Q320 530 314 460Q315 400 368 375Z"/>
      <circle cx="1430" cy="462" r="93"/><path d="M1397 422L1472 453L1424 514Z"/>
      <path d="M1020 560Q1050 485 1145 486Q1240 490 1285 600Q1310 700 1230 762M1020 560Q1005 700 1050 760Q1085 790 1110 786M1137 605Q1150 560 1195 562Q1255 570 1255 630Q1250 670 1222 680Q1260 770 1190 792Q1095 800 1098 710Q1035 700 1033 650Q1040 590 1090 585Q1125 585 1137 605ZM1130 725L1205 708Q1200 750 1165 752Q1130 748 1130 725ZM1010 710Q970 715 955 660Q940 555 980 550Q1000 548 1003 580L1012 700M980 712L985 840Q1000 880 1050 860Q1065 830 1050 790L1018 712M1003 562L1028 560M1245 490Q1280 475 1310 515Q1345 590 1325 625Q1305 640 1290 620L1245 540ZM1216 515L1245 508M1216 515L1275 600M1295 640L1302 770Q1315 800 1365 785Q1380 760 1370 740L1325 630"/><ellipse cx="1089" cy="650" rx="15" ry="20"/><ellipse cx="1200" cy="620" rx="15" ry="20"/><g class="dots"><circle cx="1145" cy="682" r="7"/><circle cx="1165" cy="676" r="7"/><circle cx="1092" cy="650" r="7"/><circle cx="1202" cy="620" r="7"/></g>
      <path d="M0 635L280 598Q298 598 300 615L315 725Q315 738 300 742L0 792M0 668L220 640Q235 650 222 662L0 692M0 716L205 692Q225 698 210 712L0 744M104 940L92 845Q92 820 120 815L430 776Q445 778 450 795L458 852L494 884L460 900Q455 922 435 925L290 942M145 852L400 822Q415 832 400 845L148 874Q130 868 145 852M155 902L315 880Q335 888 320 902L160 922Q140 915 155 902"/>
      <path d="M552 670L740 705Q745 715 720 758L655 730Q650 740 705 765Q710 785 675 823Q660 820 552 680ZM852 680L898 650L908 715M852 680L856 738M855 698L900 672"/><circle cx="844" cy="738" r="13"/><circle cx="898" cy="718" r="11"/>
      <path d="M750 940L785 815Q795 795 815 798L890 820Q915 835 912 855L880 940M765 900Q830 900 870 938M820 805L812 830M842 810L834 838M864 818L856 846M886 830L878 860M610 940L650 918Q680 920 674 940M968 940Q1000 895 1035 940M1190 940Q1190 880 1245 840L1238 812L1298 828L1265 875L1258 855Q1220 880 1215 940M1110 890Q1140 870 1190 885M1110 890Q1100 905 1120 910L1185 904M1228 940L1232 910L1275 918L1280 900L1328 915L1315 940M1510 940L1472 790Q1470 770 1490 762L1568 742M1530 940L1492 790Q1490 780 1505 775L1568 758"/>
      <use href="#st" transform="translate(775 597) rotate(20) scale(1.350)"/>
      <circle cx="963" cy="12" r="13"/><circle cx="1008" cy="44" r="16"/><circle cx="1004" cy="94" r="18"/><circle cx="1228" cy="238" r="13"/><circle cx="1225" cy="342" r="20"/><circle cx="1215" cy="419" r="27"/><circle cx="1279" cy="401" r="18"/><circle cx="1470" cy="82" r="14"/><circle cx="1545" cy="357" r="15"/><circle cx="1529" cy="575" r="16"/><circle cx="1475" cy="616" r="17"/><circle cx="1421" cy="662" r="19"/><circle cx="1480" cy="693" r="15"/><circle cx="1538" cy="667" r="25"/><circle cx="989" cy="471" r="16"/><circle cx="892" cy="521" r="26"/><circle cx="811" cy="503" r="17"/><circle cx="654" cy="570" r="14"/><circle cx="625" cy="507" r="25"/><circle cx="551" cy="492" r="15"/><circle cx="531" cy="438" r="20"/><circle cx="381" cy="628" r="33"/><circle cx="467" cy="608" r="22"/><circle cx="536" cy="598" r="18"/><circle cx="602" cy="603" r="23"/><circle cx="401" cy="705" r="15"/><circle cx="466" cy="717" r="22"/><circle cx="547" cy="768" r="17"/><circle cx="593" cy="836" r="14"/><circle cx="559" cy="893" r="26"/><circle cx="726" cy="848" r="13"/><circle cx="29" cy="527" r="19"/><circle cx="80" cy="550" r="16"/><circle cx="149" cy="554" r="12"/><circle cx="0" cy="305" r="14"/><circle cx="10" cy="878" r="29"/><circle cx="1409" cy="820" r="13"/><circle cx="1394" cy="892" r="22"/><circle cx="1448" cy="923" r="17"/>
    </g>

    <!-- lower right: clock, citrus, gamepad, croissant -->
    <g class="low" transform="translate(540 1480) scale(.3444 .3333)">
      <text class="word" x="-80" y="110" font-size="190" transform="rotate(8 -10 40)">文</text><text class="word" x="85" y="216" font-size="224" transform="rotate(-6 150 140)">A</text>
      <path d="M455 50Q430 0 385 10Q365 20 375 40Q360 60 375 75Q400 90 455 50Q455 0 490-20M455 50Q500 0 540 0Q580 10 568 40Q570 75 545 82Q510 80 455 50Q460 100 465 140Q480 165 500 145Q520 145 524 125Q510 90 455 50L370 140Q370 160 380 152L460 65"/>
      <path d="M706 0L718 50M872 0L828 65M715 52L830 68Q850 75 842 100L835 125Q830 142 800 138L710 128Q685 120 690 90Q695 60 715 52"/>
      <path d="M970 10Q940 40 850 215Q835 270 900 290Q940 295 970 260Q1020 230 1120 275Q1145 300 1154 345M1080 0Q1110 55 1200 62Q1310 30 1314 110L1284 350M1015 40Q1035 20 1055 38V72L1078 85Q1080 110 1070 115L1040 110L1025 132Q1005 130 1010 100L985 90Q978 70 990 68L1012 72ZM1135 92L1147 98L1122 160L1108 154ZM990 380Q950 320 970 295Q1010 265 1060 290Q1075 305 1066 315Q1085 330 1070 358Q1050 365 1036 350Q1000 330 990 380M915 378L1045 440M915 378Q900 395 930 410L1018 450M912 385L865 520Q860 570 985 595"/>
      <circle cx="1031" cy="183" r="33"/><circle cx="1160" cy="230" r="33"/><circle cx="1242" cy="110" r="15"/><circle cx="1197" cy="127" r="15"/><circle cx="1259" cy="157" r="15"/><circle cx="1215" cy="175" r="14"/>
      <path d="M392 330Q392 300 420 290L690 208Q730 208 740 240L758 325Q755 355 730 370L460 448Q420 452 410 420ZM645 220Q650 200 675 205M470 455Q465 475 480 472L720 405Q735 395 725 375"/><text class="digits" x="434" y="414" font-size="104" transform="rotate(-17 434 414)">09:28</text>
      <path d="M322 225Q335 220 365 250Q375 265 360 262L325 240ZM298 275L355 284Q360 292 350 294L300 290ZM300 322L350 314Q362 320 350 328L302 338Z"/>
      <ellipse cx="146" cy="490" rx="140" ry="144"/>
      <g><path id="seg" d="M142 475L122 395Q120 375 146 374Q172 375 170 395L148 475Z"/><use href="#seg" transform="rotate(45 146 490)"/><use href="#seg" transform="rotate(90 146 490)"/><use href="#seg" transform="rotate(135 146 490)"/><use href="#seg" transform="rotate(180 146 490)"/><use href="#seg" transform="rotate(225 146 490)"/><use href="#seg" transform="rotate(270 146 490)"/><use href="#seg" transform="rotate(315 146 490)"/></g>
      <path d="M325 545Q315 520 340 525L560 770Q560 795 540 788ZM350 525L375 503L388 515L382 535L400 532L412 555L408 570L428 572L445 595L432 608"/>
      <path d="M615 560Q640 490 710 485Q780 520 802 580Q800 660 710 688Q650 660 615 560ZM720 490Q740 460 770 470Q800 500 805 560M770 470Q775 440 800 450L802 510M610 590Q580 620 595 650Q620 700 655 698Q680 695 685 682M595 635Q550 645 562 680Q585 700 618 688"/>
      <path d="M0 745L145 710L350 658Q372 660 375 680L420 940M145 720L195 940M145 710Q210 680 320 642Q335 640 340 655M0 738L130 708M180 768L210 785L215 760L232 780L240 740M260 742L335 728Q352 735 345 748L265 762Q248 755 260 742M220 808L345 785Q362 792 352 806L225 830Q205 822 220 808M230 864L355 840Q372 848 360 860L238 886Q218 878 230 864M245 920L310 908Q330 915 315 928L260 940M0 828L90 810Q108 818 92 832L0 848M20 940Q15 915 48 912Q50 885 65 886Q80 892 78 910Q115 905 115 925L108 940"/>
      <path d="M586 800Q585 788 600 782L636 770L645 748L712 736L720 755L760 750Q780 752 783 770L800 870Q800 885 785 890L630 925Q610 928 605 910ZM655 775L700 762Q710 770 700 780L665 786Q652 784 655 775"/><circle cx="692" cy="845" r="43"/><circle cx="692" cy="845" r="17"/><circle cx="754" cy="778" r="11"/>
      <path d="M875 885L890 840Q840 800 850 755Q865 725 900 727Q940 740 955 815L975 835Q975 850 955 845L915 835L888 885Q880 895 875 885M895 780Q890 820 875 880M895 780L955 825M890 890L930 940M972 850Q985 890 984 940M1020 680L1000 740Q990 830 1015 850Q1050 860 1060 825L1090 770M1000 740L1050 720M1350 415Q1385 350 1425 362Q1455 390 1440 440Q1430 490 1412 490M1425 490L1418 560M1400 650L1422 715Q1435 725 1440 710L1412 635M1568 725Q1530 750 1534 800Q1540 835 1568 838M1510 180Q1500 80 1520 70Q1540 55 1568 70M1510 180Q1520 210 1568 212M1470 180Q1475 260 1568 262M1490 180Q1500 240 1568 242M1470 180Q1480 170 1490 180M1235 940Q1260 900 1300 905Q1350 910 1368 940"/>
      <use href="#spark" transform="translate(475 830) rotate(8) scale(.75)"/><use href="#spark" transform="translate(1377 67) rotate(8) scale(.75)"/><use href="#st" transform="translate(1495 608) rotate(12)"/>
      <circle cx="247" cy="58" r="16"/><circle cx="331" cy="52" r="15"/><circle cx="276" cy="123" r="25"/><circle cx="129" cy="274" r="22"/><circle cx="214" cy="260" r="16"/><circle cx="59" cy="300" r="18"/><circle cx="437" cy="204" r="15"/><circle cx="584" cy="167" r="23"/><circle cx="622" cy="86" r="13"/><circle cx="778" cy="208" r="20"/><circle cx="794" cy="298" r="12"/><circle cx="791" cy="370" r="14"/><circle cx="850" cy="365" r="16"/><circle cx="853" cy="434" r="13"/><circle cx="370" cy="457" r="21"/><circle cx="325" cy="402" r="9"/><circle cx="438" cy="524" r="11"/><circle cx="563" cy="492" r="14"/><circle cx="622" cy="491" r="16"/><circle cx="529" cy="553" r="23"/><circle cx="516" cy="620" r="13"/><circle cx="829" cy="667" r="16"/><circle cx="868" cy="623" r="13"/><circle cx="927" cy="659" r="18"/><circle cx="970" cy="643" r="13"/><circle cx="818" cy="729" r="14"/><circle cx="32" cy="677" r="12"/><circle cx="1145" cy="838" r="28"/><circle cx="1090" cy="876" r="20"/><circle cx="1231" cy="796" r="14"/><circle cx="1235" cy="876" r="13"/><circle cx="1357" cy="862" r="13"/><circle cx="1417" cy="792" r="15"/><circle cx="1486" cy="807" r="14"/><circle cx="1506" cy="706" r="19"/><circle cx="1495" cy="904" r="26"/><circle cx="1553" cy="910" r="13"/><circle cx="1529" cy="499" r="16"/><circle cx="1507" cy="401" r="22"/><circle cx="1484" cy="330" r="15"/><circle cx="1363" cy="252" r="19"/><circle cx="1416" cy="268" r="13"/><circle cx="1330" cy="304" r="11"/><circle cx="1378" cy="184" r="13"/><circle cx="1482" cy="27" r="19"/><circle cx="1203" cy="12" r="17"/><circle cx="490" cy="935" r="24"/><circle cx="862" cy="935" r="13"/>
    </g>
  </svg>

  <ul class="tasks">
    <li class="task">
      <label><input type="checkbox"><span>Code</span></label>
      <button class="edit" type="button" aria-label="Edit Code"><svg aria-hidden="true"><use href="#pencil"/></svg></button>
      <button class="delete" type="button" aria-label="Delete Code"><svg aria-hidden="true"><use href="#trash"/></svg></button>
    </li>
    <li class="task done">
      <label><input type="checkbox" checked><span>Stay Home</span></label>
      <button class="edit" type="button" aria-label="Edit Stay Home"><svg aria-hidden="true"><use href="#pencil"/></svg></button>
      <button class="delete" type="button" aria-label="Delete Stay Home"><svg aria-hidden="true"><use href="#trash"/></svg></button>
    </li>
    <li class="task done">
      <label><input type="checkbox" checked><span>Eat Fruits</span></label>
      <button class="edit" type="button" aria-label="Edit Eat Fruits"><svg aria-hidden="true"><use href="#pencil"/></svg></button>
      <button class="delete" type="button" aria-label="Delete Eat Fruits"><svg aria-hidden="true"><use href="#trash"/></svg></button>
    </li>
    <li class="task">
      <label><input type="checkbox"><span>Clean Drawers</span></label>
      <button class="edit" type="button" aria-label="Edit Clean Drawers"><svg aria-hidden="true"><use href="#pencil"/></svg></button>
      <button class="delete" type="button" aria-label="Delete Clean Drawers"><svg aria-hidden="true"><use href="#trash"/></svg></button>
    </li>
  </ul>
  <button class="fab" type="button" aria-label="Add task"><svg width="34" height="34" viewBox="0 0 34 34" aria-hidden="true"><path d="M14 0H20Q21 0 21 1V13H33Q34 13 34 14V20Q34 21 33 21H21V33Q21 34 20 34H14Q13 34 13 33V21H1Q0 21 0 20V14Q0 13 1 13H13V1Q13 0 14 0Z"/></svg></button>
</main>

<nav class="navbar" aria-label="System">
  <button type="button" aria-label="Back"><svg width="42" height="44" viewBox="0 0 42 44" aria-hidden="true"><path d="M1 20L33 1Q37 0 37 3V41Q37 44 33 42L1 24Q-1 22 1 20Z"/></svg></button>
  <button type="button" aria-label="Home"><svg width="38" height="38" viewBox="0 0 38 38" aria-hidden="true"><circle cx="19" cy="19" r="19"/></svg></button>
  <button type="button" aria-label="Recent apps"><svg width="40" height="40" viewBox="0 0 40 40" aria-hidden="true"><rect width="40" height="40" rx="3"/></svg></button>
</nav>
</body>
</html>
```
FILE: styles.css
```
* { box-sizing: border-box; }

body {
  margin: 0;
  min-height: 100vh;
  display: flex;
  flex-direction: column;
  font-family: Roboto, "Liberation Sans", sans-serif;
  background: #fafafa;
}

button {
  border: 0;
  padding: 0;
  background: none;
  cursor: pointer;
}

svg { display: block; }
.defs { position: absolute; }

/* System status bar */
.status {
  display: flex;
  align-items: center;
  height: 63px;
  padding: 0 21px;
  background: #00574b;
  color: #fff;
  fill: #fff;
}
.clock {
  margin-right: 28px;
  padding-top: 3px;
  font-size: 37px;
  line-height: 40px;
}
.notices { display: flex; gap: 18px; }
.notice { width: 40px; height: 40px; }
.signals { display: flex; gap: 3px; margin-left: auto; }
.battery { margin-left: 16px; }

/* Title bar */
.appbar {
  position: relative;
  z-index: 2;
  display: flex;
  align-items: center;
  justify-content: space-between;
  height: 147px;
  padding: 0 34px 0 42px;
  background: #008577;
  box-shadow: 0 2px 12px rgba(0, 0, 0, .25);
}
h1 {
  margin: 0;
  padding-top: 4px;
  color: #fff;
  font-size: 53px;
  font-weight: 500;
  line-height: 60px;
}
.settings svg { width: 60px; height: 60px; fill: #000; }

/* Task list */
main {
  position: relative;
  flex: 1;
  overflow: hidden;
  background: linear-gradient(#fafafa 50%, #f7f7f7 92%, #efefef);
}
.tasks {
  position: relative;
  margin: 0;
  padding: 0;
  list-style: none;
}
.task {
  display: flex;
  gap: 13px;
  height: 160px;
  padding: 13px 13px 13px 31px;
  border-bottom: 3px solid rgba(0, 0, 0, .13);
  background: #ade6f0;
  background-clip: padding-box;
}
.done { background-color: #acacac; }
.task label {
  flex: 1;
  display: flex;
  align-items: center;
  gap: 18px;
  color: #000;
  font-size: 47px;
  line-height: 60px;
}
.task span { padding-top: 4px; }
.task input {
  appearance: none;
  width: 48px;
  height: 48px;
  margin: 0;
  border: 5px solid rgba(0, 0, 0, .54);
  border-radius: 5px;
}
.task input:checked {
  border: 0;
  background: #d81b60;
}
.task input:checked::before {
  content: "";
  display: block;
  width: 48px;
  height: 48px;
  background: #acacac;
  clip-path: polygon(6px 24px, 9px 20px, 19px 30px, 39px 10px, 42px 13px, 19px 37px);
}
.task button { width: 96px; }
.task button svg {
  width: 100%;
  height: 100%;
  stroke-width: 8px;
  stroke-linejoin: round;
}
.edit { background: #3cd144; }
.edit svg { fill: #b1edb4; stroke: #237d28; }
.delete { background: #f44336; }
.delete svg { fill: #fbb4af; stroke: #92281f; }
.thick { fill: none; stroke-width: 12px; }
.slot { fill: #92281f; stroke-width: 3px; }

/* Doodle wallpaper */
.wallpaper {
  position: absolute;
  inset: 0;
  width: 100%;
  height: 100%;
  fill: none;
  stroke: #dfdfdf;
  stroke-width: 3px;
  stroke-linejoin: round;
  stroke-linecap: round;
}
.wallpaper path,
.wallpaper circle,
.wallpaper ellipse { vector-effect: non-scaling-stroke; }
.low { stroke: #dadada; }
.dots { fill: #dcdcdc; stroke: none; }
.word {
  font-family: Roboto, "Noto Sans CJK SC", sans-serif;
  font-weight: 700;
  stroke-width: 8px;
}
.digits {
  font-family: "Liberation Mono", monospace;
  stroke-width: 6px;
  stroke-dasharray: 20 8;
}

/* Add button */
.fab {
  position: absolute;
  right: 53px;
  bottom: 53px;
  display: grid;
  place-items: center;
  width: 147px;
  height: 147px;
  border-radius: 50%;
  background: #008577;
  box-shadow: 0 10px 20px rgba(0, 0, 0, .25), 0 0 6px rgba(0, 0, 0, .12);
  fill: #fff;
}

/* System navigation bar */
.navbar {
  display: flex;
  height: 126px;
  padding: 0 72px;
  background: #000;
}
.navbar button {
  flex: 1;
  display: grid;
  place-items: center;
  fill: #999;
}
```
